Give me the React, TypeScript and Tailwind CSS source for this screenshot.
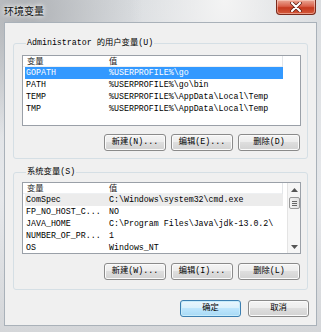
import React from 'react';

const userVars: [string, string][] = [
  ['GOPATH', '%USERPROFILE%\\go'],
  ['PATH', '%USERPROFILE%\\go\\bin'],
  ['TEMP', '%USERPROFILE%\\AppData\\Local\\Temp'],
  ['TMP', '%USERPROFILE%\\AppData\\Local\\Temp'],
];

const sysVars: [string, string][] = [
  ['ComSpec', 'C:\\Windows\\system32\\cmd.exe'],
  ['FP_NO_HOST_C...', 'NO'],
  ['JAVA_HOME', 'C:\\Program Files\\Java\\jdk-13.0.2\\'],
  ['NUMBER_OF_PR...', '1'],
  ['OS', 'Windows_NT'],
];

const WinButton = ({ label, primary = false, wide = false }: { label: string; primary?: boolean; wide?: boolean }) => (
  <button
    className={
      'h-[17px] rounded-[3px] border text-[8.3px] leading-none text-black ' +
      (wide ? 'w-[61px] ' : 'w-[62px] ') +
      (primary
        ? 'border-[#3c7fb1] bg-[linear-gradient(#eaf6fd_0%,#d9f0fc_50%,#bee6fd_50%,#a7d9f5_100%)] shadow-[inset_0_0_0_1px_#c8ecfb]'
        : 'border-[#8a8a8a] bg-[linear-gradient(#f4f4f4_0%,#ececec_50%,#dedede_50%,#d2d2d2_100%)] shadow-[inset_0_0_0_1px_#fbfbfb]')
    }
  >
    {label}
  </button>
);

const VarList = ({ rows, selected, soft, scroll, height }: { rows: [string, string][]; selected?: number; soft?: number; scroll?: boolean; height: string }) => (
  <div className={'relative overflow-hidden border border-[#9aa0a8] bg-white ' + height}>
    {/* header */}
    <div className="flex h-[11px] w-[260px] items-center border-b border-[#eef0f2] leading-[11px] text-[#1e1e1e]">
      <div className="w-[83px] pl-[4px]">变量</div>
      <div className="w-[177px] border-r border-[#e3e6e9] pl-[3px]">值</div>
    </div>
    {rows.map(([name, value], i) => (
      <div
        key={name}
        className={
          'ml-[2px] flex h-[12px] w-[258px] items-center leading-[12px] whitespace-nowrap ' +
          (i === selected ? 'bg-[#3399ff] text-white' : i === soft ? 'bg-[#ececec] text-black' : 'text-black')
        }
      >
        <div className="w-[81px] pl-[1px]">{name}</div>
        <div className="pl-[3px]">{value}</div>
      </div>
    ))}
    {scroll && (
      <div className="absolute top-0 right-0 bottom-0 flex w-[13px] flex-col items-center border-l border-[#e4e4e4] bg-[#f6f6f6]">
        <div className="flex h-[14px] w-full items-center justify-center">
          <svg width="7" height="4" viewBox="0 0 7 4"><path d="M0 4 L3.5 0 L7 4 Z" fill="#555" /></svg>
        </div>
        <div className="flex h-[12px] w-[11px] flex-col items-center justify-center gap-[1px] rounded-[2px] border border-[#9a9a9a] bg-[linear-gradient(90deg,#f3f3f3,#e2e2e2)]">
          <div className="h-px w-[5px] bg-[#666]" />
          <div className="h-px w-[5px] bg-[#666]" />
          <div className="h-px w-[5px] bg-[#666]" />
        </div>
        <div className="flex-1" />
        <div className="flex h-[12px] w-full items-center justify-center">
          <svg width="7" height="4" viewBox="0 0 7 4"><path d="M0 0 L3.5 4 L7 0 Z" fill="#555" /></svg>
        </div>
      </div>
    )}
  </div>
);

const App = () => {
  return (
    <div className="relative h-[332px] w-[321px] overflow-hidden bg-[radial-gradient(ellipse_at_8%_4%,#aeb1b5_0%,transparent_28%),radial-gradient(ellipse_at_70%_0%,#f4f4f4_0%,transparent_30%),linear-gradient(#dadde0,#e6e8eb_60%,#d4d6d9)] font-['Liberation_Mono','Noto_Sans_CJK_SC',monospace] text-[8.3px]">
      {/* title bar */}
      <div className="flex h-[22px] items-start">
        <div className="pt-[4px] pl-[4px] font-['Noto_Sans_CJK_SC',sans-serif] text-[10px] leading-[14px] text-[#111] [text-shadow:0_0_4px_#fff,0_0_6px_#fff]">
          环境变量
        </div>
      </div>
      {/* close button */}
      <div className="absolute top-0 right-[5px] flex h-[15px] w-[40px] items-center justify-center rounded-b-[4px] border border-t-0 border-[#7a2a1c] bg-[linear-gradient(#eaa795_0%,#d9604a_45%,#c5391f_55%,#d45a3c_100%)] shadow-[inset_0_0_0_1px_rgba(255,220,210,0.5)]">
        <svg width="12" height="10" viewBox="0 0 12 10">
          <path d="M2 1 L10 9 M10 1 L2 9" stroke="#5a1a10" strokeWidth="3.6" strokeLinecap="round" />
          <path d="M2 1 L10 9 M10 1 L2 9" stroke="#fff" strokeWidth="2.2" strokeLinecap="round" />
        </svg>
      </div>

      {/* client area */}
      <div className="ml-[4px] h-[304px] w-[313px] border border-[#a9b1b9] bg-[#f0f0f0] pr-[8px] pl-[8px] text-black">
        <fieldset className="mt-[14px] rounded-[3px] border border-[#d5dfe5] pr-[6px] pb-[7px] pl-[8px]">
          <legend className="ml-[4px] px-[1px] leading-[12px]">Administrator 的用户变量(U)</legend>
          <div className="pt-[6px]">
            <VarList rows={userVars} selected={0} height="h-[71px]" />
          </div>
          <div className="mt-[8px] mr-[1px] flex justify-end gap-[5px]">
            <WinButton label="新建(N)..." />
            <WinButton label="编辑(E)..." />
            <WinButton label="删除(D)" />
          </div>
        </fieldset>

        <fieldset className="mt-[7px] rounded-[3px] border border-[#d5dfe5] pr-[6px] pb-[9px] pl-[8px]">
          <legend className="ml-[4px] px-[1px] leading-[12px]">系统变量(S)</legend>
          <div className="pt-[4px]">
            <VarList rows={sysVars} soft={0} scroll height="h-[72px]" />
          </div>
          <div className="mt-[9px] mr-[1px] flex justify-end gap-[5px]">
            <WinButton label="新建(W)..." />
            <WinButton label="编辑(I)..." />
            <WinButton label="删除(L)" />
          </div>
        </fieldset>

        <div className="mt-[10px] -mr-[1px] flex justify-end gap-[7px]">
          <WinButton label="确定" primary wide />
          <WinButton label="取消" wide />
        </div>
      </div>
    </div>
  );
};

export default App;
